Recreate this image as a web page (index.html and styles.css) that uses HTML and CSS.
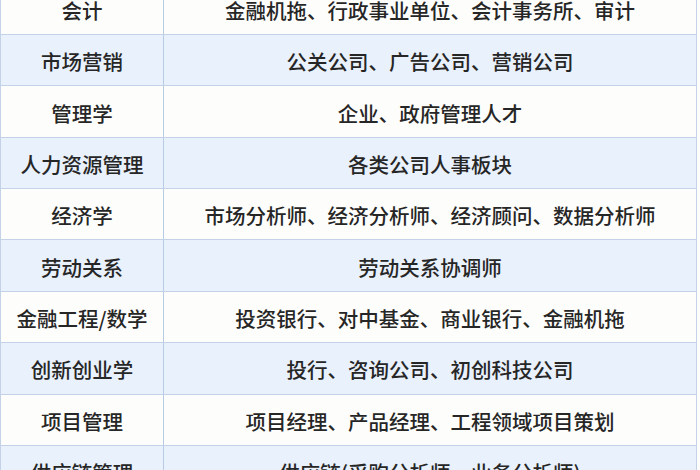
FILE: index.html
```html
<!DOCTYPE html>
<html lang="zh-CN">
<head>
<meta charset="utf-8">
<link rel="stylesheet" href="styles.css">
</head>
<body>
<div class="table">
  <div class="row"><div class="c1">会计</div><div class="c2">金融机拖、行政事业单位、会计事务所、审计</div></div>
  <div class="row alt"><div class="c1">市场营销</div><div class="c2">公关公司、广告公司、营销公司</div></div>
  <div class="row"><div class="c1">管理学</div><div class="c2">企业、政府管理人才</div></div>
  <div class="row alt"><div class="c1">人力资源管理</div><div class="c2">各类公司人事板块</div></div>
  <div class="row"><div class="c1">经济学</div><div class="c2">市场分析师、经济分析师、经济顾问、数据分析师</div></div>
  <div class="row alt"><div class="c1">劳动关系</div><div class="c2">劳动关系协调师</div></div>
  <div class="row"><div class="c1">金融工程/数学</div><div class="c2">投资银行、对中基金、商业银行、金融机拖</div></div>
  <div class="row alt"><div class="c1">创新创业学</div><div class="c2">投行、咨询公司、初创科技公司</div></div>
  <div class="row"><div class="c1">项目管理</div><div class="c2">项目经理、产品经理、工程领域项目策划</div></div>
  <div class="row alt"><div class="c1">供应链管理</div><div class="c2">供应链(采购分析师、业务分析师)</div></div>
</div>
</body>
</html>
```
FILE: styles.css
```css
html, body {
  margin: 0;
  padding: 0;
  background: #fdfdfb;
  overflow: hidden;
}
.table {
  width: 697px;
  margin-top: -16.4px;
  border-left: 1px solid #c3d2e6;
  box-sizing: border-box;
  font-family: "Noto Sans CJK SC", "Noto Sans", sans-serif;
  font-size: 20.5px;
  font-weight: 500;
  color: #262626;
}
.row {
  display: flex;
  height: 51.375px;
  box-sizing: border-box;
  border-bottom: 1px solid #c3d2e6;
  border-right: 1px solid #c3d2e6;
  background: #fdfdfb;
}
.row.alt {
  background: #e9f1fc;
}
.c1, .c2 {
  display: flex;
  align-items: center;
  justify-content: center;
  white-space: nowrap;
  padding-top: 2px;
}
.c1 {
  width: 162px;
  border-right: 1px solid #b9cbe3;
}
.c2 {
  flex: 1;
}
```
